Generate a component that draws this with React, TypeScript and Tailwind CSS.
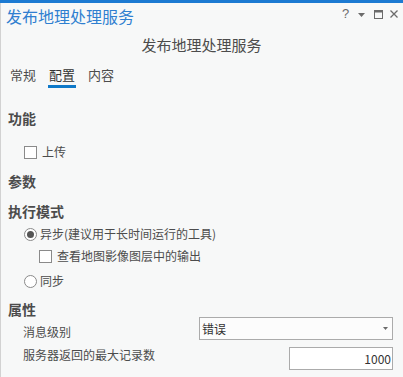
import React, { useState } from 'react';

const font = { fontFamily: '"Noto Sans CJK SC", "Noto Sans", sans-serif' };

const Checkbox = ({ checked, onChange }: { checked: boolean; onChange: () => void }) => (
  <button
    onClick={onChange}
    className="w-[13px] h-[13px] border border-[#8a8a8a] bg-white flex items-center justify-center shrink-0"
  >
    {checked && <span className="w-[7px] h-[7px] bg-[#4c4c4c]" />}
  </button>
);

const Radio = ({ checked, onChange }: { checked: boolean; onChange: () => void }) => (
  <button
    onClick={onChange}
    className="w-[13px] h-[13px] rounded-full border border-[#8a8a8a] bg-white flex items-center justify-center shrink-0"
  >
    {checked && <span className="w-[7px] h-[7px] rounded-full bg-[#555555]" />}
  </button>
);

export default function App() {
  const [tab, setTab] = useState('配置');
  const [upload, setUpload] = useState(false);
  const [mode, setMode] = useState<'async' | 'sync'>('async');
  const [viewOutput, setViewOutput] = useState(false);
  const [maxRecords, setMaxRecords] = useState('1000');

  return (
    <div className="w-[403px] h-[377px] flex flex-col bg-[#f7f8f8] text-[#4c4c4c] overflow-hidden" style={font}>
      <div className="h-[3px] bg-[#1c7ad2] shrink-0" />
      <div className="flex-1 flex flex-col border-l border-[#d2d2d2]">
        {/* Pane header */}
        <div className="h-[25px] flex items-center justify-between pl-[5px] pr-[5px]">
          <span className="text-[16px] leading-[20px] text-[#2f7fd0]">发布地理处理服务</span>
          <div className="flex items-center text-[#6b6b6b] -mt-[3px]">
            <span className="text-[13px] leading-[14px] w-[8px] mr-[8px]" style={{ fontFamily: '"Liberation Sans", sans-serif' }}>?</span>
            <svg width="7" height="4" viewBox="0 0 7 4" className="mr-[9px] mt-[2px]">
              <path d="M0 0 L7 0 L3.5 4 Z" fill="#6b6b6b" />
            </svg>
            <svg width="9" height="9" viewBox="0 0 9 9" className="mr-[7px]">
              <rect x="0.5" y="0.5" width="8" height="8" fill="none" stroke="#6b6b6b" />
              <rect x="0" y="0" width="9" height="2.5" fill="#6b6b6b" />
            </svg>
            <svg width="8" height="8" viewBox="0 0 8 8">
              <path d="M0.5 0.5 L7.5 7.5 M7.5 0.5 L0.5 7.5" stroke="#6b6b6b" strokeWidth="1.3" />
            </svg>
          </div>
        </div>

        {/* Tool title */}
        <div className="h-[34px] flex items-center justify-center text-[15px] leading-[20px] text-[#4c4c4c] -ml-[1px]">
          发布地理处理服务
        </div>

        {/* Tabs */}
        <div className="h-[26px] flex pl-[8px] gap-[11px]">
          {['常规', '配置', '内容'].map(t => (
            <button
              key={t}
              onClick={() => setTab(t)}
              className={`pt-[4px] flex flex-col text-[13px] leading-[18px] ${tab === t ? 'text-[#333333]' : 'text-[#4c4c4c]'}`}
            >
              <span className="px-[1px]">{t}</span>
              <span className={`mt-[1px] h-[3px] w-full ${tab === t ? 'bg-[#0f79c8]' : 'bg-transparent'}`} />
            </button>
          ))}
        </div>

        {/* Body */}
        <div className="flex flex-col pl-[7px] pr-[10px]">
          <div className="mt-[20px] text-[14px] leading-[20px] font-bold">功能</div>
          <label className="mt-[14px] h-[20px] flex items-center gap-[5px] pl-[16px] text-[12px]">
            <Checkbox checked={upload} onChange={() => setUpload(!upload)} />
            <span>上传</span>
          </label>

          <div className="mt-[9px] text-[14px] leading-[20px] font-bold">参数</div>

          <div className="mt-[10px] text-[14px] leading-[20px] font-bold">执行模式</div>
          <div className="mt-[3px] h-[20px] flex items-center gap-[3px] pl-[16px] text-[12px]">
            <Radio checked={mode === 'async'} onChange={() => setMode('async')} />
            <span>异步(建议用于长时间运行的工具)</span>
          </div>
          <div className="mt-[2px] h-[20px] flex items-center gap-[5px] pl-[31px] text-[12px]">
            <Checkbox checked={viewOutput} onChange={() => setViewOutput(!viewOutput)} />
            <span>查看地图影像图层中的输出</span>
          </div>
          <div className="mt-[5px] h-[20px] flex items-center gap-[3px] pl-[16px] text-[12px]">
            <Radio checked={mode === 'sync'} onChange={() => setMode('sync')} />
            <span>同步</span>
          </div>

          <div className="mt-[10px] text-[14px] leading-[16px] font-bold">属性</div>
          <div className="flex items-end justify-between pl-[15px]">
            <span className="text-[12px] leading-[16px]">消息级别</span>
            <div className="w-[194px] h-[23px] border border-[#ababab] bg-[#fcfcfc] flex items-center justify-between pl-[2px] pr-[4px]">
              <span className="text-[12px] text-[#333333]">错误</span>
              <svg width="5" height="3" viewBox="0 0 5 3">
                <path d="M0 0 L5 0 L2.5 3 Z" fill="#6b6b6b" />
              </svg>
            </div>
          </div>
          <div className="mt-[7px] flex items-start justify-between pl-[15px]">
            <span className="text-[12px] leading-[16px]">服务器返回的最大记录数</span>
            <input
              value={maxRecords}
              onChange={e => setMaxRecords(e.target.value)}
              className="w-[104px] h-[23px] border border-[#ababab] bg-white text-right pr-[1px] text-[12px] text-[#333333] outline-none"
              style={font}
            />
          </div>
        </div>
      </div>
    </div>
  );
}
